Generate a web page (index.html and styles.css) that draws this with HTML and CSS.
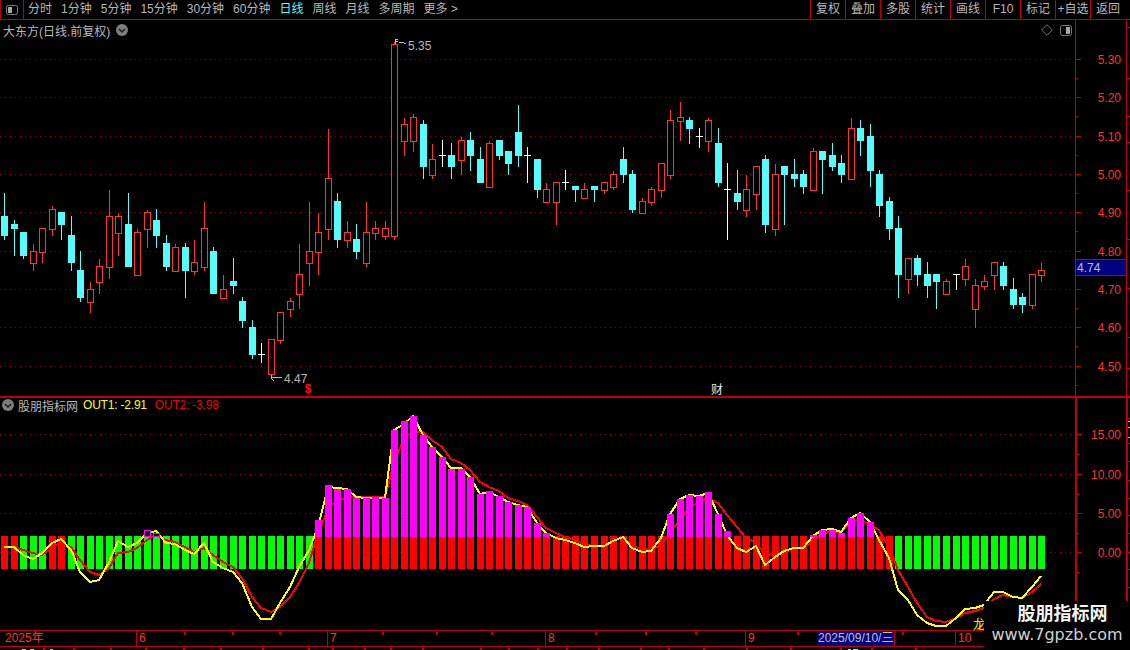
FILE: index.html
```html
<!DOCTYPE html>
<html lang="zh">
<head>
<meta charset="utf-8">
<title>大东方 日线</title>
<link rel="stylesheet" href="styles.css">
</head>
<body>
<div class="app">
  <header class="toolbar">
    <button class="tb-toggle" aria-label="切换">
      <svg class="ico-toggle" width="12" height="10" viewBox="0 0 12 10"><rect class="tg-frame" x="0.5" y="0.5" width="11" height="9" rx="2"/><rect class="tg-fill" x="2" y="2" width="4" height="6"/></svg>
    </button>
    <nav class="periods">
      <span>分时</span><span>1分钟</span><span>5分钟</span><span>15分钟</span><span>30分钟</span><span>60分钟</span><span class="on">日线</span><span>周线</span><span>月线</span><span>多周期</span><span>更多 &gt;</span>
    </nav>
    <nav class="actions">
      <span>复权</span><span>叠加</span><span>多股</span><span>统计</span><span>画线</span><span>F10</span><span>标记</span><span>+自选</span><span>返回</span>
    </nav>
  </header>

  <section class="panel panel-price">
    <svg id="price" class="chart" width="1130" height="376" viewBox="0 20 1130 376"></svg>
    <div class="legend legend-price">
      <span>大东方(日线.前复权)</span>
      <svg class="ico-circle" width="12" height="12" viewBox="0 0 12 12"><circle class="ci-bg" cx="6" cy="6" r="6"/><path class="ci-ch" d="M3 5l3 3 3-3"/></svg>
    </div>
    <div class="corner-tools">
      <svg width="12" height="12" viewBox="0 0 12 12"><path class="tg-frame" d="M6 .7L11.3 6 6 11.3 .7 6z"/></svg>
      <svg class="ico-toggle" width="12" height="11" viewBox="0 0 12 11"><rect class="tg-frame" x="0.5" y="0.5" width="11" height="10" rx="2"/><rect class="tg-fill" x="6" y="2" width="4" height="7"/></svg>
    </div>
  </section>

  <section class="panel panel-ind">
    <svg id="indicator" class="chart" width="1130" height="232" viewBox="0 398 1130 232"></svg>
    <div class="legend legend-ind">
      <svg class="ico-circle" width="12" height="12" viewBox="0 0 12 12"><circle class="ci-bg" cx="6" cy="6" r="6"/><path class="ci-ch" d="M3 5l3 3 3-3"/></svg>
      <span class="ind-name">股朋指标网</span>
      <span class="out1">OUT1: -2.91</span>
      <span class="out2">OUT2: -3.98</span>
    </div>
  </section>

  <footer class="timeline">
    <span>2025年</span><span class="mark">6</span><span class="mark">7</span><span class="mark">8</span><span class="mark">9</span>
    <span class="cursor-date">2025/09/10/三</span><span></span><span class="mark">10</span><span class="tl-axis"></span>
    <svg id="tlticks" class="tl-ticks" width="1130" height="4" viewBox="0 630 1130 4"></svg>
  </footer>
  <svg id="strip" class="strip" width="1130" height="4" viewBox="0 646 1130 4"></svg>

  <aside class="watermark">
    <div class="wm-title">股朋指标网</div>
    <div class="wm-url">www.7gpzb.com</div>
  </aside>
</div>
<script src="chart.js"></script>
</body>
</html>
```

FILE: styles.css
```css
* { box-sizing: border-box; }
html, body { margin: 0; padding: 0; background: #000; }
body { font-family: "Liberation Sans", "Noto Sans CJK SC", sans-serif; font-size: 12px; color: #b8b8b8; }

.app { position: relative; width: 1130px; height: 650px; overflow: hidden; background: #000; display: flex; flex-direction: column; }

/* toolbar */
.toolbar { height: 20px; flex: none; display: flex; align-items: stretch; border-bottom: 1px solid #c00000; line-height: 19px; }
.tb-toggle { width: 24px; padding: 0; background: none; border: 0; border-left: 1px solid #c00000; border-right: 1px solid #c00000; display: flex; align-items: center; justify-content: center; }
.periods { display: flex; gap: 9px; padding-left: 4px; }
.periods .on { color: #54fcfc; }
.actions { margin-left: auto; display: flex; padding-right: 5px; }
.actions span { width: 35px; text-align: center; border-left: 1px solid #c00000; white-space: nowrap; }

.ico-toggle .tg-fill { fill: #a8a8a8; }
.tg-frame { fill: none; stroke: #7c7c7c; stroke-width: 1; }
.ci-bg { fill: #7e7e7e; }
.ci-ch { fill: none; stroke: #1c1c1c; stroke-width: 1.5; }

/* panels */
.panel { position: relative; flex: none; }
.panel-price { height: 378px; border-bottom: 2px solid #c00000; }
.panel-ind { height: 232px; }
.chart { display: block; }

.legend { position: absolute; display: flex; align-items: center; height: 14px; white-space: nowrap; }
.legend-price { left: 3px; top: 3px; gap: 6px; }
.legend-ind { left: 2px; top: 0; }
.ind-name { margin-left: 4px; }
.out1, .out2 { letter-spacing: -0.2px; }
.out1 { margin-left: 5px; color: #ffff00; }
.out2 { margin-left: 8px; color: #f00000; }
.corner-tools { position: absolute; right: 58px; top: 4px; display: flex; gap: 7px; align-items: center; }

/* svg marks */
.grid { stroke: #8c0000; stroke-width: 1; stroke-dasharray: 1 4; shape-rendering: crispEdges; }
.frame { stroke: #c00000; stroke-width: 1; shape-rendering: crispEdges; }
.frame-bold { stroke: #c00000; stroke-width: 2; shape-rendering: crispEdges; }
.wick-r { fill: #ff3232; }
.wick-c { fill: #54fcfc; }
.wick-w { fill: #ffffff; }
.body-r { fill: #000; stroke: #ff3232; stroke-width: 1; shape-rendering: crispEdges; }
.body-c { fill: #54fcfc; }
.bar-red { fill: #ff0000; }
.bar-green { fill: #00ff00; }
.bar-mag { fill: #ff00ff; }
.bar-hollow { fill: #000; stroke: #ff00ff; stroke-width: 1; shape-rendering: crispEdges; }
.ln-y, .ln-r { fill: none; stroke-width: 2; shape-rendering: crispEdges; stroke-linejoin: round; }
.ln-y { stroke: #ffff00; }
.ln-r { stroke: #ff0000; }
.ax-label { fill: #ff3232; font-size: 12px; text-anchor: end; }
.ann { fill: #b8b8b8; font-size: 12px; }
.ann-ln { fill: none; stroke: #c0c0c0; stroke-width: 1; shape-rendering: crispEdges; }
.sig-s { fill: #ff1010; font-size: 12px; font-weight: bold; text-anchor: middle; }
.sig-c { fill: #d8ecff; font-size: 12px; text-anchor: middle; }
.sig-l { fill: #ffff00; font-size: 12px; }
.tag-bg { fill: #000080; stroke: #c00000; stroke-width: 1; shape-rendering: crispEdges; }
.tag-tx { fill: #c0c0c0; font-size: 12px; }
.edge-tick { fill: #c00000; }
.dot-w { fill: #b8b8b8; }

/* timeline */
.timeline { position: relative; flex: none; height: 17px; display: grid; grid-template-columns: 136px 191px 218px 200px 72px 78px 60px 120px 55px; border-top: 1px solid #c00000; border-bottom: 1px solid #c00000; line-height: 15px; color: #ff3232; }
.timeline > span { padding-left: 5px; white-space: nowrap; overflow: hidden; }
.timeline .mark { padding-left: 2px; border-left: 1px solid #c00000; }
.timeline .cursor-date { padding-left: 1px; background: #000080; color: #c0c0c0; border-right: 1px solid #c00000; }
.timeline .tl-axis { border-left: 2px solid #c00000; }
.tl-ticks { position: absolute; left: 0; top: 0; }
.strip { display: block; flex: none; }

/* watermark */
.watermark { position: absolute; left: 984px; top: 601px; width: 146px; height: 49px; background: #000; text-align: center; }
.wm-title { font-size: 18px; font-weight: 700; line-height: 26px; color: #f4f4f4; margin-left: 11px; }
.wm-url { font-family: "DejaVu Sans", sans-serif; font-size: 16px; line-height: 20px; color: #d0d0d0; white-space: nowrap; margin-top: -2px; }
```

FILE: chart.js
```js
var candles = ("c193,216,235,239 c220,224,228,255 c232,232,255,258 r244,251,263,270 r228,228,252,262 r206,209,229,235 " +
"c212,212,224,239 c216,235,262,270 c251,270,297,301 r282,289,302,312 r259,266,282,293 r190,216,267,278 " +
"r213,216,233,255 c193,224,266,266 r229,232,275,275 r210,212,229,247 c209,220,235,247 c235,243,266,270 " +
"r244,247,271,271 c243,247,270,297 r240,262,271,274 r202,228,267,270 c247,251,293,293 r275,289,298,298 " +
"c258,281,285,293 c297,301,320,327 c320,327,354,358 w343,354,354,362 r339,339,374,378 r312,312,340,343 " +
"r298,301,309,316 r244,274,294,308 r202,251,263,285 r213,232,252,274 r129,178,229,239 c193,201,239,247 " +
"r221,232,240,247 c224,239,251,258 r202,232,263,266 r221,228,233,239 r221,228,236,239 r42,44,236,239 " +
"r118,124,141,155 r114,117,141,151 c120,124,166,178 r144,159,175,178 w140,155,155,166 c143,155,166,178 " +
"r137,140,160,174 c132,140,155,170 c147,159,182,182 r141,143,187,187 c140,140,155,159 c151,151,163,174 " +
"c105,132,155,166 w147,155,155,182 c159,159,189,197 r183,189,202,202 r182,182,202,224 w170,182,182,189 " +
"c186,186,189,201 r183,189,198,198 c186,186,189,201 r182,182,190,193 r171,174,187,189 c147,159,174,182 " +
"c170,174,209,212 r198,201,213,213 r187,189,202,205 r163,163,190,197 r110,120,175,178 r102,117,121,140 " +
"c117,120,128,143 w128,136,136,147 r118,120,141,151 c128,143,182,186 w163,189,189,239 c170,193,201,209 " +
"r175,189,210,216 r166,166,194,209 c155,159,224,232 r164,174,229,235 c166,166,174,224 c159,174,178,186 " +
"c170,174,186,193 r148,151,190,190 c151,151,159,193 c143,155,166,170 c155,163,174,182 r118,128,179,179 " +
"c120,128,140,155 c124,136,170,186 c170,174,205,216 c197,201,228,239 c216,228,274,297 r258,258,279,293 " +
"c255,258,274,285 c262,274,285,297 c274,274,281,308 r279,281,294,294 w274,274,274,289 r259,266,279,285 " +
"r279,285,309,327 r275,281,286,289 r262,262,275,289 c262,266,285,289 c278,289,304,308 c293,297,304,312 " +
"r274,274,305,308 r263,270,275,281").split(" ");

var yellow = [547,547,555,559,553,543,539,550,572,582,580,562,541,547,543,533,531,543,544,550,554,543,562,568,572,583,607,619,619,603,587,567,550,527,487,488,489,497,498,498,498,430,424,416,435,447,457,468,468,477,494,492,497,502,505,507,523,533,538,540,543,547,546,546,541,537,548,552,551,538,514,499,495,496,493,514,535,548,552,546,565,557,551,548,548,536,530,529,532,518,513,522,540,558,590,600,615,623,626,626,618,609,608,605,592,592,597,598,587,576];
var red = [547,547,550,553,555,548,542,547,560,572,575,568,553,552,548,540,535,540,542,547,552,548,555,562,567,578,597,608,612,607,597,583,563,533,510,500,498,497,497,497,497,463,438,432,432,440,447,459,463,470,482,487,491,498,501,505,517,528,533,537,540,544,546,546,541,537,545,550,549,546,532,520,508,502,498,503,515,527,538,542,555,555,552,549,548,542,533,532,532,523,519,525,530,547,570,587,603,617,621,622,618,613,611,608,599,595,597,598,592,584];

var magenta = {33:520,34:485,35:489,36:489,37:498,38:498,39:497,40:498,41:430,42:421,43:416,44:435,45:447,46:457,47:469,48:469,49:477,50:494,51:491,52:496,53:502,54:505,55:507,56:523,57:533,70:514,71:499,72:495,73:496,74:492,75:514,76:531,85:535,86:530,87:530,88:533,89:518,90:513,91:522};

function px(i) { return Math.round(4.2 + 9.513 * i); }
function rect(x, y, w, h, cls) { return '<rect class="' + cls + '" x="' + x + '" y="' + y + '" width="' + w + '" height="' + h + '"/>'; }
function hline(x1, x2, y, cls) { return '<line class="' + cls + '" x1="' + x1 + '" x2="' + x2 + '" y1="' + y + '" y2="' + y + '"/>'; }
function vline(x, y1, y2, cls) { return '<line class="' + cls + '" x1="' + x + '" x2="' + x + '" y1="' + y1 + '" y2="' + y2 + '"/>'; }
function text(x, y, s, cls) { return '<text class="' + cls + '" x="' + x + '" y="' + y + '">' + s + '</text>'; }

/* ---- price panel ---- */
var s = "";
var priceRows = [59, 97, 136, 174, 212, 251, 289, 327, 366];
var priceLabels = ["5.30", "5.20", "5.10", "5.00", "4.90", "4.80", "4.70", "4.60", "4.50"];
priceRows.forEach(function (y) { s += hline(0, 1075, y + 0.5, "grid"); });

candles.forEach(function (c, i) {
  var t = c.charAt(0), v = c.slice(1).split(",").map(Number);
  var x = px(i), hi = v[0], top = v[1], bot = v[2], lo = v[3];
  s += rect(x, hi, 1, lo - hi + 1, "wick-" + t);
  if (t === "w") {
    s += rect(x - 3, top, 7, 1, "wick-w");
  } else if (t === "c") {
    s += rect(x - 3, top, 7, bot - top + 1, "body-c");
  } else {
    s += rect(x - 2.5, top + 0.5, 6, bot - top, "body-r");
  }
});

/* high / low annotations */
s += '<path class="ann-ln" d="M398 39.5H395.5V43.5M395.5 41.5H398M399 42.5H402L406 43.5"/>';
s += text(408, 50, "5.35", "ann");
s += '<path class="ann-ln" d="M271 377.5H282M271.5 375V379M272 379L274 381"/>';
s += text(284, 383, "4.47", "ann");
s += text(308, 393, "$", "sig-s");
s += text(717, 394, "财", "sig-c");

/* axis */
s += vline(1075.5, 20, 396, "frame") + vline(1126.5, 20, 396, "frame");
priceRows.forEach(function (y, i) {
  s += hline(1076, 1081, y + 0.5, "frame");
  s += hline(1076, 1078, y + 19.5, "frame");
  s += text(1121, y + 5, priceLabels[i], "ax-label");
});
[27, 78, 116, 142, 190, 239, 288, 337, 368].forEach(function (y) { s += rect(1127, y, 3, 1, "edge-tick"); });
s += rect(1075.5, 259.5, 51, 16, "tag-bg");
s += text(1077, 272, "4.74", "tag-tx");
document.getElementById("price").innerHTML = s;

/* ---- indicator panel ---- */
s = "";
var indRows = [434, 474, 513, 552];
var indLabels = ["15.00", "10.00", "5.00", "0.00"];
indRows.forEach(function (y) { s += hline(0, 1075, y + 0.5, "grid"); });

var redBars = function (i) { return i === 0 || i === 1 || i === 5 || i === 6 || (i >= 33 && i <= 93); };
for (var i = 0; i < 110; i++) {
  s += rect(px(i) - 3, 536, 7, 33, redBars(i) ? "bar-red" : "bar-green");
}
function poly(a, cls) {
  return '<polyline class="' + cls + '" points="' + a.map(function (y, i) { return px(i) + "," + y; }).join(" ") + '"/>';
}
s += poly(red, "ln-r") + poly(yellow, "ln-y");
Object.keys(magenta).forEach(function (k) {
  var i = +k;
  s += rect(px(i) - 3, magenta[k], 7, 537 - magenta[k], "bar-mag");
});
s += rect(px(15) - 3 + 0.5, 530.5, 6, 6, "bar-hollow") + rect(px(16) - 3 + 0.5, 533.5, 6, 3, "bar-hollow");
s += text(973, 629, "龙", "sig-l");

s += vline(1076, 398, 630, "frame-bold") + vline(1127, 398, 630, "frame-bold");
indRows.forEach(function (y, i) {
  s += hline(1077, 1082, y + 0.5, "frame");
  s += hline(1077, 1079, y + 20.5, "frame");
  s += text(1121, y + 5, indLabels[i], "ax-label");
});
[418, 443, 461, 480, 498, 515, 533, 552, 569, 587].forEach(function (y) { s += rect(1128, y, 2, 1, "edge-tick"); });
[421, 427, 437].forEach(function (y) { s += rect(1128, y, 2, 1, "dot-w"); });
document.getElementById("indicator").innerHTML = s;

/* ---- timeline ticks ---- */
s = "";
[184, 232, 279, 382, 436, 491, 595, 645, 695, 797, 902].forEach(function (x) { s += rect(x, 631, 1, 2, "frame"); });
document.getElementById("tlticks").innerHTML = s;

s = "";
[43, 73, 110, 145, 183, 220, 262, 308, 332, 364, 390, 422, 480, 508, 537, 566, 598, 640, 668, 703, 746, 790, 840, 871, 915].forEach(function (x) { s += rect(x, 647, 1, 3, "frame"); });
s += rect(22, 648, 4, 2, "dot-w") + rect(30, 648, 4, 2, "dot-w") + rect(50, 648, 3, 2, "dot-w");
s += rect(848, 648, 3, 2, "wick-c") + rect(853, 648, 5, 2, "wick-c");
document.getElementById("strip").innerHTML = s;
```
